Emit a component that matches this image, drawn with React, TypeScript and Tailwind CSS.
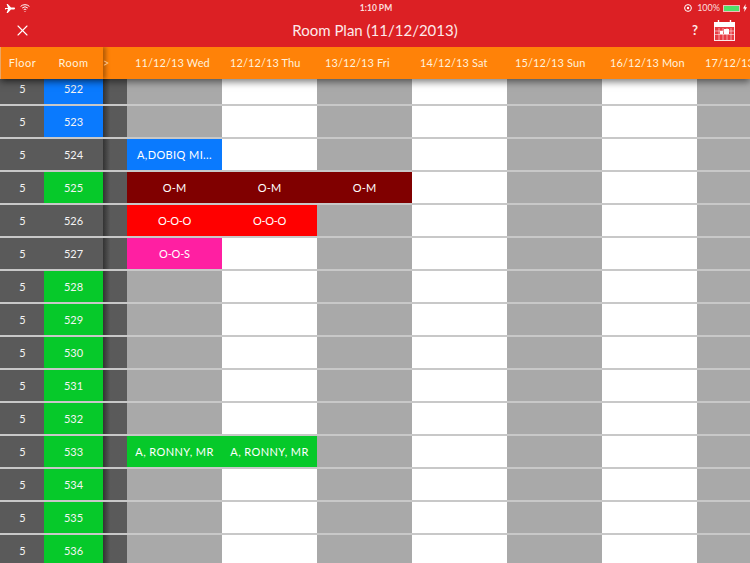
import { X } from 'lucide-react';

type Cell = { label: string; className: string };
type Row = { room: string; roomColor: string; cells?: Cell[] };

const DAYS = [
  '11/12/13 Wed',
  '12/12/13 Thu',
  '13/12/13 Fri',
  '14/12/13 Sat',
  '15/12/13 Sun',
  '16/12/13 Mon',
  '17/12/13 Tue',
];

const GREEN = 'bg-[#06c92a]';
const BLUE = 'bg-[#0a7afe]';
const GRAY = 'bg-[#5a5a5a]';

const OM: Cell = { label: 'O-M', className: 'bg-[#800000] tracking-[0.2px]' };
const OOO: Cell = { label: 'O-O-O', className: 'bg-[#ff0000] tracking-[-0.3px]' };
const RONNY: Cell = { label: 'A, RONNY, MR', className: 'bg-[#06c92a] tracking-[0.4px]' };

const ROWS: Row[] = [
  { room: '522', roomColor: BLUE },
  { room: '523', roomColor: BLUE },
  { room: '524', roomColor: GRAY, cells: [{ label: 'A,DOBIQ MI...', className: 'bg-[#0a7afe] tracking-[0.4px]' }] },
  { room: '525', roomColor: GREEN, cells: [OM, OM, OM] },
  { room: '526', roomColor: GRAY, cells: [OOO, OOO] },
  { room: '527', roomColor: GRAY, cells: [{ label: 'O-O-S', className: 'bg-[#ff1fa2] tracking-[-0.2px]' }] },
  { room: '528', roomColor: GREEN },
  { room: '529', roomColor: GREEN },
  { room: '530', roomColor: GREEN },
  { room: '531', roomColor: GREEN },
  { room: '532', roomColor: GREEN },
  { room: '533', roomColor: GREEN, cells: [RONNY, RONNY] },
  { room: '534', roomColor: GREEN },
  { room: '535', roomColor: GREEN },
  { room: '536', roomColor: GREEN },
];

function StatusBar() {
  return (
    <div className="grid h-[16px] grid-cols-[1fr_auto_1fr] items-center pl-[5px] pr-[3px] text-[9px] text-[#fbdcdc]">
      <div className="flex items-center gap-[5px]">
        <svg width="10" height="9" viewBox="0 0 10 9" fill="#fff">
          <path d="M0 4h3L1.6 0h1.2L6 3.6h3c.6 0 1 .4 1 .9s-.4.9-1 .9H6L2.8 9H1.6L3 5H0.8L0 6V4z" />
        </svg>
        <svg width="10" height="8" viewBox="0 0 10 8" fill="none" stroke="#fff" strokeWidth="1">
          <path d="M.6 2.4a6.5 6.5 0 0 1 8.8 0M2.2 4a4.2 4.2 0 0 1 5.6 0M3.7 5.6a2 2 0 0 1 2.6 0" />
          <path d="M5 8l-.8-1h1.6z" fill="#fff" stroke="none" />
        </svg>
      </div>
      <span className="text-[8.5px] font-bold">1:10 PM</span>
      <div className="flex items-center justify-end gap-[3px]">
        <svg width="8" height="8" viewBox="0 0 8 8" fill="none" stroke="#fff" strokeWidth="1">
          <circle cx="4" cy="4" r="3.4" />
          <circle cx="4" cy="4" r="1.2" fill="#fff" stroke="none" />
        </svg>
        <span className="ml-[2px]">100%</span>
        <div className="h-[7px] w-[17px] border border-[#f3b9b9] bg-[#4fe06a]" />
        <svg width="4" height="8" viewBox="0 0 4 8" fill="#fff">
          <path d="M2.6 0 0 4.6h1.6L1.2 8 4 3.2H2.3z" />
        </svg>
      </div>
    </div>
  );
}

function CalendarIcon() {
  return (
    <svg width="21" height="21" viewBox="0 0 21 21" fill="none" stroke="#fff">
      <rect x="0.5" y="2.5" width="20" height="18" fill="#e83c44" strokeOpacity="0.9" />
      <rect x="0" y="2" width="21" height="5" fill="#fff" stroke="none" />
      <path d="M4.5 0v4M16.5 0v4" strokeWidth="1.4" stroke="#fff" />
      <path d="M1 11h19M1 14.5h19M5 8v12M9 8v12M13 8v12M17 8v12" strokeWidth="0.7" strokeOpacity="0.75" />
      <rect x="6" y="11" width="3" height="3" fill="#fff" stroke="none" />
      <rect x="10" y="9" width="5" height="5" fill="#fff" stroke="none" />
    </svg>
  );
}

function Header() {
  return (
    <div className="relative z-30 h-[47px] bg-[#dc2024]">
      <StatusBar />
      <div className="grid h-[31px] grid-cols-[1fr_auto_1fr] items-center px-[15px] pb-[2px]">
        <X size={15} color="#fff" strokeWidth={1.5} className="scale-[1.2]" />
        <span className="text-[15px] text-[#fdeaea]">Room Plan (11/12/2013)</span>
        <div className="flex items-center justify-end gap-[16px]">
          <span className="text-[13px] font-bold text-[#fdeaea]">?</span>
          <CalendarIcon />
        </div>
      </div>
    </div>
  );
}

function ColumnHeader() {
  return (
    <div className="relative z-20 flex h-[32px] items-center border-l border-[#eda86a] bg-[#ff8208] text-[11px] tracking-[0.1px] text-[#fff1dc] shadow-[0_3px_7px_rgba(0,0,0,0.5)]">
      <div className="flex h-full w-[102px] shrink-0 items-center shadow-[3px_0_4px_rgba(0,0,0,0.3)]">
        <span className="w-[43px] text-center tracking-[0.5px]">Floor</span>
        <span className="w-[59px] text-center tracking-[0.5px]">Room</span>
      </div>
      <span className="w-[24px] shrink-0 text-left text-[#ffc58a]">&gt;</span>
      {DAYS.map((day) => (
        <span key={day} className="w-[95px] shrink-0 whitespace-nowrap pl-[8px]">
          {day}
        </span>
      ))}
    </div>
  );
}

function PlanRow({ row }: { row: Row }) {
  const cells = row.cells ?? [];
  return (
    <div className="flex h-[33px] border-b-2 border-[#c8c8c8] text-[11px] text-[#f4f4f4]">
      <div className="flex w-[44px] shrink-0 items-center justify-center bg-[#5a5a5a] pl-px pt-px">5</div>
      <div className={`flex w-[59px] shrink-0 items-center justify-center pt-px ${row.roomColor}`}>{row.room}</div>
      <div className="w-[24px] shrink-0 bg-gradient-to-r from-[#333333] via-[#5a5a5a] via-30% to-[#5a5a5a]" />
      {DAYS.map((day, i) => {
        const cell = cells[i];
        if (cell) {
          return (
            <div
              key={day}
              className={`flex w-[95px] shrink-0 items-center justify-center whitespace-nowrap pt-px text-white ${cell.className}`}
            >
              {cell.label}
            </div>
          );
        }
        return <div key={day} className={`w-[95px] shrink-0 ${i % 2 === 0 ? 'bg-[#a9a9a9]' : 'bg-white'}`} />;
      })}
    </div>
  );
}

export default function App() {
  return (
    <div className="h-[563px] w-[750px] overflow-hidden bg-[#c8c8c8] font-['Lato',sans-serif]">
      <Header />
      <ColumnHeader />
      {/* first row is scrolled partly under the column header */}
      <div className="-mt-[6px]">
        {ROWS.map((row) => (
          <PlanRow key={row.room} row={row} />
        ))}
      </div>
    </div>
  );
}
